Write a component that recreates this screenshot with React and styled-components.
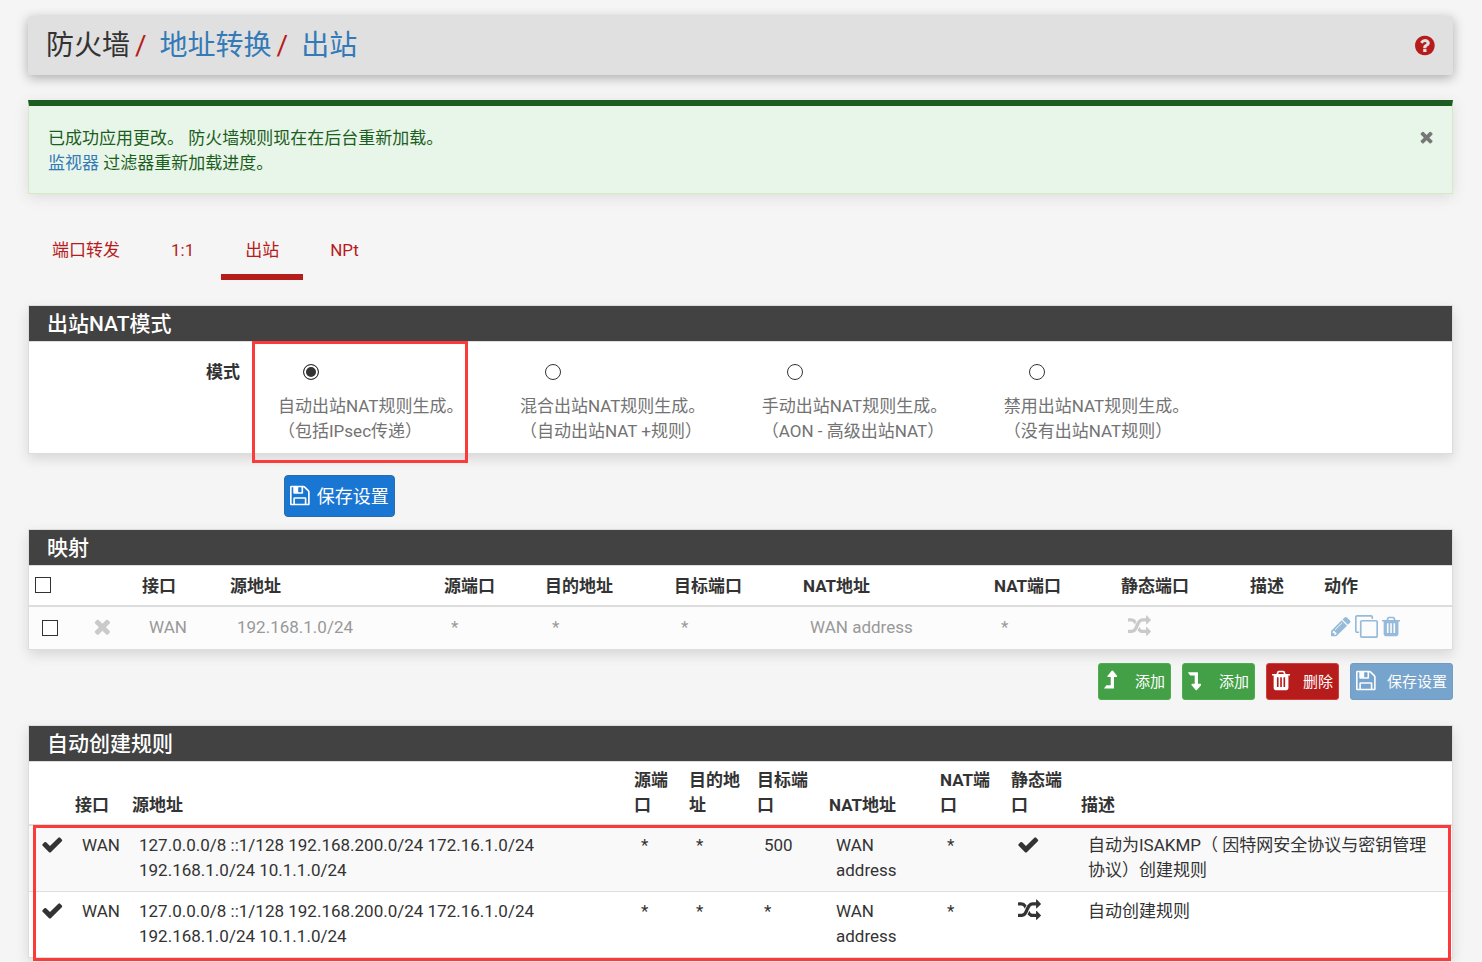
import React, { useState } from 'react';
import styled, { createGlobalStyle } from 'styled-components';

const GlobalStyle = createGlobalStyle`
    *, *::before, *::after {
        box-sizing: border-box;
    }

    body {
        margin: 0;
        background-color: #f5f5f5;
        color: #333;
        font-family: Roboto, "Noto Sans CJK SC", sans-serif;
        font-size: 17px;
        line-height: 25px;
    }

    a {
        color: #337ab7;
        text-decoration: none;
    }

    button, input {
        font-family: inherit;
        margin: 0;
    }
`

const Page = styled.main`
    padding: 16px 29px 4px 28px;
`

// ---------------------------------------------------------------------------
// icons: [left edge, width, path] on a grid 1792 units high

const icons = {
    help: [128, 1536, 'M1024 1376v-192q0-14-9-23t-23-9h-192q-14 0-23 9t-9 23v192q0 14 9 23t23 9h192q14 0 23-9t9-23zm256-672q0-88-55.5-163t-138.5-116-170-41q-243 0-371 213-15 24 8 42l132 100q7 6 19 6 16 0 25-12 53-68 86-92 34-24 86-24 48 0 85.5 26t37.5 59q0 38-20 61t-68 45q-63 28-115.5 86.5t-52.5 125.5v36q0 14 9 23t23 9h192q14 0 23-9t9-23q0-19 21.5-49.5t54.5-49.5q32-18 49-28.5t46-35 44.5-48 28-60.5 12.5-81zm384 192q0 209-103 385.5t-279.5 279.5-385.5 103-385.5-103-279.5-279.5-103-385.5 103-385.5 279.5-279.5 385.5-103 385.5 103 279.5 279.5 103 385.5z'],
    save: [128, 1536, 'M512 1536h768v-384h-768v384zm896 0h128v-896q0-14-10-38.5t-20-34.5l-281-281q-10-10-34-20t-39-10v416q0 40-28 68t-68 28h-576q-40 0-68-28t-28-68v-416h-128v1280h128v-416q0-40 28-68t68-28h832q40 0 68 28t28 68v416zm-384-928v-320q0-13-9.5-22.5t-22.5-9.5h-192q-13 0-22.5 9.5t-9.5 22.5v320q0 13 9.5 22.5t22.5 9.5h192q13 0 22.5-9.5t9.5-22.5zm640 32v928q0 40-28 68t-68 28h-1344q-40 0-68-28t-28-68v-1344q0-40 28-68t68-28h928q40 0 88 20t76 48l280 280q28 28 48 76t20 88z'],
    trash: [192, 1408, 'M704 1376v-704q0-14-9-23t-23-9h-64q-14 0-23 9t-9 23v704q0 14 9 23t23 9h64q14 0 23-9t9-23zm256 0v-704q0-14-9-23t-23-9h-64q-14 0-23 9t-9 23v704q0 14 9 23t23 9h64q14 0 23-9t9-23zm256 0v-704q0-14-9-23t-23-9h-64q-14 0-23 9t-9 23v704q0 14 9 23t23 9h64q14 0 23-9t9-23zm-544-992h448l-48-117q-7-9-17-11h-317q-10 2-17 11zm928 32v64q0 14-9 23t-23 9h-96v948q0 83-47 143.5t-113 60.5h-832q-66 0-113-58.5t-47-141.5v-952h-96q-14 0-23-9t-9-23v-64q0-14 9-23t23-9h309l70-167q15-37 54-63t79-26h320q40 0 79 26t54 63l70 167h309q14 0 23 9t9 23z'],
    check: [96, 1600, 'M1671 566q0 40-28 68l-724 724-136 136q-28 28-68 28t-68-28l-136-136-362-362q-28-28-28-68t28-68l136-136q28-28 68-28t68 28l294 295 656-657q28-28 68-28t68 28l136 136q28 28 28 68z'],
    times: [240, 1312, 'M1490 1322q0 40-28 68l-136 136q-28 28-68 28t-68-28l-294-294-294 294q-28 28-68 28t-68-28l-136-136q-28-28-28-68t28-68l294-294-294-294q-28-28-28-68t28-68l136-136q28-28 68-28t68 28l294 294 294-294q28-28 68-28t68 28l136 136q28 28 28 68t-28 68l-294 294 294 294q28 28 28 68z'],
    pencil: [128, 1536, 'M491 1536l91-91-235-235-91 91v107h128v128h107zm523-928q0-22-22-22-10 0-17 7l-542 542q-7 7-7 17 0 22 22 22 10 0 17-7l542-542q7-7 7-17zm-54-192l416 416-832 832h-416v-416zm683 96q0 53-37 90l-166 166-416-416 166-165q36-38 90-38 53 0 91 38l235 234q37 39 37 91z'],
    clone: [0, 1792, 'M1664 1632v-1088q0-13-9.5-22.5t-22.5-9.5h-1088q-13 0-22.5 9.5t-9.5 22.5v1088q0 13 9.5 22.5t22.5 9.5h1088q13 0 22.5-9.5t9.5-22.5zm128-1088v1088q0 66-47 113t-113 47h-1088q-66 0-113-47t-47-113v-1088q0-66 47-113t113-47h1088q66 0 113 47t47 113zm-384-384v160h-128v-160q0-13-9.5-22.5t-22.5-9.5h-1088q-13 0-22.5 9.5t-9.5 22.5v1088q0 13 9.5 22.5t22.5 9.5h160v128h-160q-66 0-113-47t-47-113v-1088q0-66 47-113t113-47h1088q66 0 113 47t47 113z'],
    random: [0, 1792, 'M666 481q-60 92-137 273-22-45-37-72.5t-40.5-63.5-51-56.5-63-35-81.5-14.5h-224q-14 0-23-9t-9-23v-192q0-14 9-23t23-9h224q250 0 410 225zm1126 799q0 14-9 23l-320 320q-9 9-23 9-13 0-22.5-9.5t-9.5-22.5v-192q-32 0-85 .5t-81 1-73-1-71-5-64-10.5-63-18.5-58-28.5-59-40-55-53.5-56-69.5q59-93 136-273 22 45 37 72.5t40.5 63.5 51 56.5 63 35 81.5 14.5h256v-192q0-14 9-23t23-9q12 0 24 10l319 319q9 9 9 23zm0-896q0 14-9 23l-320 320q-9 9-23 9-13 0-22.5-9.5t-9.5-22.5v-192h-256q-48 0-87 15t-69 45-51 61.5-45 77.5q-32 62-78 171-29 66-49.5 111t-54 105-64 100-74 83-90 68.5-106.5 42-128 16.5h-224q-14 0-23-9t-9-23v-192q0-14 9-23t23-9h224q48 0 87-15t69-45 51-61.5 45-77.5q32-62 78-171 29-66 49.5-111t54-105 64-100 74-83 90-68.5 106.5-42 128-16.5h256v-192q0-14 9-23t23-9q12 0 24 10l319 319q9 9 9 23z'],
    up: [256, 1050, 'M1285 595q-18 37-58 37h-192v864q0 14-9 23t-23 9h-704q-21 0-29-18-8-20 4-35l160-192q9-11 25-11h320v-640h-192q-40 0-58-37-17-37 9-68l320-384q18-22 49-22t49 22l320 384q27 32 9 68z'],
    down: [320, 1050, 'M363 256h704q13 0 22.5 9.5t9.5 23.5v863h192q40 0 58 37t-9 69l-320 384q-18 22-49 22t-49-22l-320-384q-26-31-9-69 18-37 58-37h192v-640h-320q-14 0-25-11l-160-192q-13-14-4-34 9-19 29-19z'],
}

const Svg = styled.svg`
    display: block;
    flex: none;
    height: ${({ $size }) => $size}px;
    fill: currentColor;
`

function Icon({ name, size = 23 }) {
    const [left, width, path] = icons[name]
    return (
        <Svg $size={size} viewBox={`${left} 0 ${width} 1792`} aria-hidden="true">
            <path d={path} />
        </Svg>
    )
}

// ---------------------------------------------------------------------------

const Header = styled.header`
    display: flex;
    align-items: center;
    justify-content: space-between;
    height: 59px;
    padding: 0 18px;
    background-color: #e0e0e0;
    border-radius: 3px;
    box-shadow: 0 3px 12px rgba(0, 0, 0, 0.3);
`

const Breadcrumb = styled.h1`
    display: flex;
    margin: 0;
    font-size: 28px;
    font-weight: 400;
    line-height: 36px;
`

const Slash = styled.span`
    padding: 0 13px 0 5px;
    color: #b71c1c;
`

const HelpLink = styled.a`
    color: #b71c1c;
`

const Alert = styled.div`
    display: flex;
    align-items: flex-start;
    justify-content: space-between;
    margin-top: 25px;
    padding: 20px 19px 17px;
    background-color: #e8f5e9;
    border: 1px solid #d6e9c6;
    border-top: 6px solid #1b5e20;
    color: #1b5e20;
    box-shadow: 0 3px 14px rgba(0, 0, 0, 0.1);
`

const CloseButton = styled.button`
    padding: 2px 0;
    border: none;
    background: none;
    color: #777;
    cursor: pointer;
`

const Tabs = styled.nav`
    display: flex;
    gap: 3px;
    margin: 26px 0 25px;
`

const Tab = styled.a`
    padding: 18px 24px 11px;
    border-bottom: 6px solid ${({ $active }) => $active ? '#b71c1c' : 'transparent'};
    color: #b71c1c;
`

const Panel = styled.section`
    background-color: #fff;
    border: 1px solid #ddd;
    box-shadow: 0 5px 12px rgba(0, 0, 0, 0.12);
`

const PanelTitle = styled.h2`
    margin: 0;
    padding: 5px 18px 4px;
    background-color: #424242;
    border-bottom: 1px solid #ddd;
    color: #fff;
    font-size: 21px;
    font-weight: 500;
    line-height: 26px;
`

const ModeGrid = styled.div`
    display: grid;
    grid-template-columns: 229px repeat(4, 17%);
`

const ModeLabel = styled.div`
    padding: 18px 18px 0 0;
    font-weight: 700;
    text-align: right;
`

const Option = styled.div`
    position: relative;
    padding: 22px 0 9px 20px;

    label {
        display: block;
        color: #737373;
        white-space: nowrap;
    }
`

const Radio = styled.input`
    display: block;
    appearance: none;
    width: 16px;
    height: 16px;
    && {
        margin: 0 0 14px 25px;
    }
    border: 1px solid #333;
    border-radius: 50%;
    background-color: #fff;

    &:checked {
        background-color: #333;
        box-shadow: inset 0 0 0 2px #fff;
    }
`

const Checkbox = styled.input`
    display: block;
    appearance: none;
    width: 16px;
    height: 16px;
    border: 1px solid #333;
    background-color: #fff;

    &:checked {
        background-color: #333;
        box-shadow: inset 0 0 0 3px #fff;
    }
`

// red frames that point at parts of the page
const Mark = styled.div`
    position: absolute;
    border: 3px solid #fb3a3a;
    pointer-events: none;
`

const OptionMark = styled(Mark)`
    top: -1px;
    bottom: -10px;
    left: -6px;
    width: 216px;
`

const RulesMark = styled(Mark)`
    top: 63px;
    right: 1px;
    bottom: -4px;
    left: 4px;
`

const SaveRow = styled.div`
    padding: 21px 0 12px 256px;
`

const buttonColors = {
    primary: ['#1976d2', '#2e6da4'],
    success: ['#43a047', '#4cae4c'],
    danger: ['#b71c1c', '#d43f3a'],
}

const Button = styled.button`
    display: flex;
    align-items: center;
    gap: 7px;
    height: 42px;
    padding: 0 5px 2px;
    background-color: ${({ $kind }) => buttonColors[$kind][0]};
    border: 1px solid ${({ $kind }) => buttonColors[$kind][1]};
    border-radius: 4px;
    color: #fff;
    font-size: 18px;
    cursor: pointer;
`

const SmallButton = styled(Button)`
    gap: 11px;
    height: 37px;
    border-radius: 3px;
    font-size: 15px;

    &:disabled {
        background-color: #337ab7;
        opacity: 0.65;
        cursor: not-allowed;
    }
`

const IconSlot = styled.span`
    width: 20px;
`

const ButtonRow = styled.div`
    display: flex;
    justify-content: flex-end;
    gap: 11px;
    margin: 13px 0 25px;
`

const Table = styled.table`
    width: 100%;
    table-layout: fixed;
    border-collapse: separate;
    border-spacing: 0;

    th {
        padding: 6px;
        border-bottom: 2px solid #ddd;
        text-align: left;
        vertical-align: bottom;
    }
    td {
        padding: 7px 13px 8px;
        vertical-align: top;
    }
    tbody tr:nth-child(odd) {
        background-color: #f9f9f9;
    }
    tbody tr + tr td {
        border-top: 1px solid #ddd;
    }
`

const MappingTable = styled(Table)`
    th {
        padding: 8px 6px 6px;
        vertical-align: middle;
    }
    th ${Checkbox} {
        margin-bottom: 4px;
    }
    td {
        height: 42px;
        padding: 8px 13px;
        color: #999;
    }
    && tbody tr {
        background-color: #fcfcfc;
    }
    td ${Svg} {
        opacity: 0.5;
    }
    td ${Checkbox} {
        margin-top: 5px;
    }
`

const RulesBody = styled.div`
    position: relative;
`

const Actions = styled.div`
    display: flex;
    gap: 4px;
`

// ---------------------------------------------------------------------------

const modes = [
    ['自动出站NAT规则生成。', '（包括IPsec传递）'],
    ['混合出站NAT规则生成。', '（自动出站NAT +规则）'],
    ['手动出站NAT规则生成。', '（AON - 高级出站NAT）'],
    ['禁用出站NAT规则生成。', '（没有出站NAT规则）'],
]

const mappingHeads = ['接口', '源地址', '源端口', '目的地址', '目标端口', 'NAT地址', 'NAT端口', '静态端口', '描述', '动作']
const mappingWidths = [52, 55, 88, 214, 101, 129, 129, 191, 127, 129, 74, 134]

const ruleHeads = ['', '接口', '源地址', '源端口', '目的地址', '目标端口', 'NAT地址', 'NAT端口', '静态端口', '描述']
const ruleWidths = [40, 57, 502, 55, 68, 72, 111, 71, 70, 377]

const sources = '127.0.0.0/8 ::1/128 192.168.200.0/24 172.16.1.0/24 192.168.1.0/24 10.1.1.0/24'
const rules = [
    { port: '500', icon: 'check', descr: '自动为ISAKMP（ 因特网安全协议与密钥管理协议）创建规则' },
    { port: '*', icon: 'random', descr: '自动创建规则' },
]

function Columns({ widths }) {
    return (
        <colgroup>
            {widths.map((width, i) => <col key={i} style={{ width }} />)}
        </colgroup>
    )
}

function ModePanel() {
    const [mode, setMode] = useState(0)

    return (
        <Panel>
            <PanelTitle>出站NAT模式</PanelTitle>
            <ModeGrid role="radiogroup" aria-labelledby="mode-label">
                <ModeLabel id="mode-label">模式</ModeLabel>
                {modes.map(([title, note], i) => (
                    <Option key={title}>
                        <Radio type="radio" name="mode" id={`mode-${i}`} checked={mode === i} onChange={() => setMode(i)} />
                        <label htmlFor={`mode-${i}`}>{title}<br />{note}</label>
                        {i === 0 && <OptionMark />}
                    </Option>
                ))}
            </ModeGrid>
        </Panel>
    )
}

function MappingPanel() {
    return (
        <Panel>
            <PanelTitle>映射</PanelTitle>
            <MappingTable>
                <Columns widths={mappingWidths} />
                <thead>
                    <tr>
                        <th><Checkbox type="checkbox" aria-label="全选" /></th>
                        <th></th>
                        {mappingHeads.map(head => <th key={head}>{head}</th>)}
                    </tr>
                </thead>
                <tbody>
                    <tr>
                        <td><Checkbox type="checkbox" aria-label="选择 192.168.1.0/24" /></td>
                        <td><Icon name="times" /></td>
                        <td>WAN</td>
                        <td>192.168.1.0/24</td>
                        <td>*</td>
                        <td>*</td>
                        <td>*</td>
                        <td>WAN address</td>
                        <td>*</td>
                        <td><Icon name="random" /></td>
                        <td></td>
                        <td>
                            <Actions>
                                <a href="#edit" aria-label="编辑"><Icon name="pencil" /></a>
                                <a href="#copy" aria-label="复制"><Icon name="clone" /></a>
                                <a href="#delete" aria-label="删除"><Icon name="trash" /></a>
                            </Actions>
                        </td>
                    </tr>
                </tbody>
            </MappingTable>
        </Panel>
    )
}

function RulesPanel() {
    return (
        <Panel>
            <PanelTitle>自动创建规则</PanelTitle>
            <RulesBody>
                <Table>
                    <Columns widths={ruleWidths} />
                    <thead>
                        <tr>{ruleHeads.map(head => <th key={head}>{head}</th>)}</tr>
                    </thead>
                    <tbody>
                        {rules.map(rule => (
                            <tr key={rule.descr}>
                                <td><Icon name="check" /></td>
                                <td>WAN</td>
                                <td>{sources}</td>
                                <td>*</td>
                                <td>*</td>
                                <td>{rule.port}</td>
                                <td>WAN address</td>
                                <td>*</td>
                                <td><Icon name={rule.icon} /></td>
                                <td>{rule.descr}</td>
                            </tr>
                        ))}
                    </tbody>
                </Table>
                <RulesMark />
            </RulesBody>
        </Panel>
    )
}

function ToolButton({ icon, kind, disabled, children }) {
    return (
        <SmallButton type="button" $kind={kind} disabled={disabled}>
            <IconSlot><Icon name={icon} /></IconSlot>
            {children}
        </SmallButton>
    )
}

function App() {
    const [showAlert, setShowAlert] = useState(true)

    return (
        <Page>
            <GlobalStyle />
            <Header>
                <Breadcrumb>
                    防火墙<Slash>/</Slash>
                    <a href="#nat">地址转换</a><Slash>/</Slash>
                    <a href="#outbound">出站</a>
                </Breadcrumb>
                <HelpLink href="#help" aria-label="帮助"><Icon name="help" /></HelpLink>
            </Header>

            {showAlert && (
                <Alert role="alert">
                    <div>
                        已成功应用更改。 防火墙规则现在在后台重新加载。<br />
                        <a href="#monitor">监视器</a> 过滤器重新加载进度。
                    </div>
                    <CloseButton type="button" aria-label="关闭" onClick={() => setShowAlert(false)}>
                        <Icon name="times" size={18} />
                    </CloseButton>
                </Alert>
            )}

            <Tabs>
                <Tab href="#forward">端口转发</Tab>
                <Tab href="#one">1:1</Tab>
                <Tab href="#outbound" $active aria-current="page">出站</Tab>
                <Tab href="#npt">NPt</Tab>
            </Tabs>

            <ModePanel />
            <SaveRow>
                <Button type="submit" $kind="primary"><Icon name="save" />保存设置</Button>
            </SaveRow>

            <MappingPanel />
            <ButtonRow>
                <ToolButton icon="up" kind="success">添加</ToolButton>
                <ToolButton icon="down" kind="success">添加</ToolButton>
                <ToolButton icon="trash" kind="danger">删除</ToolButton>
                <ToolButton icon="save" kind="primary" disabled>保存设置</ToolButton>
            </ButtonRow>

            <RulesPanel />
        </Page>
    );
}

export default App;
